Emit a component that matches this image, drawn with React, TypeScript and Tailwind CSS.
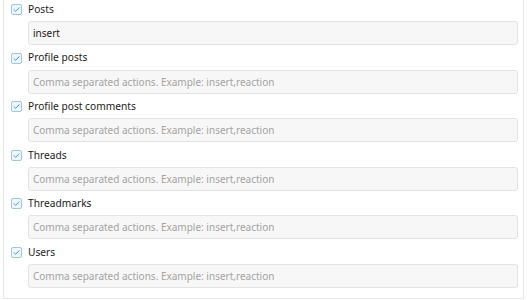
const rows = [
  { label: 'Posts', value: 'insert' },
  { label: 'Profile posts', value: '' },
  { label: 'Profile post comments', value: '' },
  { label: 'Threads', value: '' },
  { label: 'Threadmarks', value: '' },
  { label: 'Users', value: '' },
]

function CheckBox() {
  return (
    <span className="flex h-[11px] w-[11px] shrink-0 items-center justify-center rounded-[2px] border border-[#9cc8e6] bg-[#f0f7fc]">
      <svg width="9" height="9" viewBox="0 0 9 9" fill="none">
        <path d="M1.9 4.6 L3.7 6.3 L7.1 2.7" stroke="#4a9bd8" strokeWidth="1" strokeLinecap="round" strokeLinejoin="round" />
      </svg>
    </span>
  )
}

export default function App() {
  return (
    <div
      className="h-[300px] w-[527px] overflow-hidden bg-white px-[3px]"
      style={{ fontFamily: '"Noto Sans", "Open Sans", sans-serif' }}
    >
      <div className="h-[299px] border-x border-b border-[#e6e6e6] pl-[7px] pr-[6px]">
        {rows.map((r) => (
          <div key={r.label} className="mb-[3.6px]">
            <label className="flex h-[19px] items-center gap-[6px] text-[10.2px] text-[#1a1a1a]">
              <CheckBox />
              <span>{r.label}</span>
            </label>
            <input
              readOnly
              defaultValue={r.value}
              placeholder="Comma separated actions. Example: insert,reaction"
              className="ml-[17px] mt-[2px] block h-[24px] w-[490px] rounded-[3px] border border-[#e3e3e3] bg-[#f7f7f7] px-[4px] text-[10px] text-[#1a1a1a] outline-none placeholder:text-[#a3a3a3]"
            />
          </div>
        ))}
      </div>
    </div>
  )
}
